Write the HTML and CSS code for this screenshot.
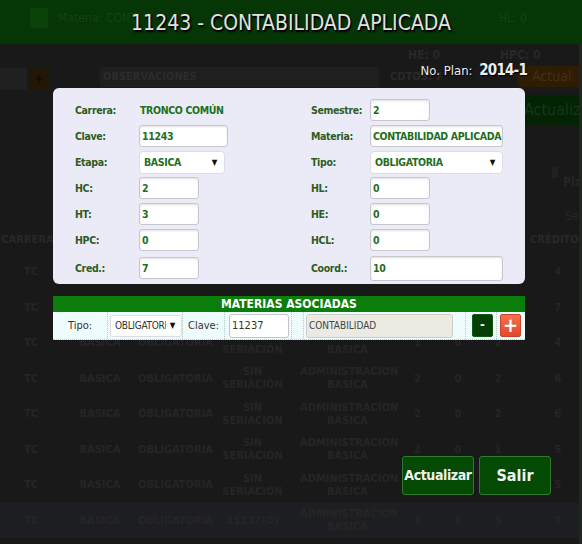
FILE: index.html
```html
<!DOCTYPE html>
<html lang="es">
<head>
<meta charset="utf-8">
<title>11243 - CONTABILIDAD APLICADA</title>
<link rel="stylesheet" href="styles.css">
</head>
<body>
<div class="page">
  <header class="topbar">
    <span class="ico"></span>
    <span class="materia">Materia: CONT</span>
    <span class="hl">HL: 0</span>
  </header>
  <div class="subrow"><span>HE: 0</span><span class="hpc">HPC: 0</span></div>
  <div class="toolrow">
    <span class="tinput"></span>
    <span class="tplus">+</span>
    <span class="obs">OBSERVACIONES</span>
    <span class="cdtos">CDTOS: 7</span>
    <span class="actual">Actual</span>
  </div>
  <div class="actbar"><span>Actualiza</span></div>
  <div class="filters">
    <div class="chk"><span class="box"></span><span class="lab">Pla</span></div>
    <div class="sea">Sea</div>
  </div>
  <table class="grid">
    <colgroup>
      <col class="c1"><col class="c2"><col class="c3"><col class="c4"><col class="c5"><col class="c6"><col class="c7"><col class="c8"><col class="c9">
    </colgroup>
    <thead>
      <tr><th>CARRERAS</th><th>ETAPA</th><th>TIPO</th><th>SERIACIÓN</th><th>ÁREA</th><th>HC</th><th>HL</th><th>HT</th><th>CRÉDITOS</th></tr>
    </thead>
    <tbody>
      <tr><td>TC</td><td>BASICA</td><td>OBLIGATORIA</td><td>SIN<br>SERIACIÓN</td><td>CONTABILIDAD<br>BASICA</td><td>1</td><td>0</td><td>2</td><td>4</td></tr>
      <tr><td>TC</td><td>BASICA</td><td>OBLIGATORIA</td><td>SIN<br>SERIACIÓN</td><td>ADMINISTRACION<br>BASICA</td><td>2</td><td>0</td><td>3</td><td>7</td></tr>
      <tr><td>TC</td><td>BASICA</td><td>OBLIGATORIA</td><td>SIN<br>SERIACIÓN</td><td>ADMINISTRACION<br>BASICA</td><td>1</td><td>0</td><td>2</td><td>4</td></tr>
      <tr><td>TC</td><td>BASICA</td><td>OBLIGATORIA</td><td>SIN<br>SERIACIÓN</td><td>ADMINISTRACION<br>BASICA</td><td>2</td><td>0</td><td>2</td><td>6</td></tr>
      <tr><td>TC</td><td>BASICA</td><td>OBLIGATORIA</td><td>SIN<br>SERIACIÓN</td><td>ADMINISTRACION<br>BASICA</td><td>2</td><td>0</td><td>2</td><td>6</td></tr>
      <tr><td>TC</td><td>BASICA</td><td>OBLIGATORIA</td><td>SIN<br>SERIACIÓN</td><td>ADMINISTRACION<br>BASICA</td><td>2</td><td>0</td><td>1</td><td>5</td></tr>
      <tr><td>TC</td><td>BASICA</td><td>OBLIGATORIA</td><td>SIN<br>SERIACIÓN</td><td>ADMINISTRACION<br>BASICA</td><td>2</td><td>0</td><td>1</td><td>5</td></tr>
      <tr class="hi"><td>TC</td><td>BASICA</td><td>OBLIGATORIA</td><td>11237(O)</td><td>ADMINISTRACION<br>BASICA</td><td>2</td><td>0</td><td>3</td><td>7</td></tr>
      <tr><td>TC</td><td>BASICA</td><td>OBLIGATORIA</td><td>SIN<br>SERIACIÓN</td><td>ADMINISTRACION<br>BASICA</td><td>2</td><td>0</td><td>2</td><td>6</td></tr>
    </tbody>
  </table>
  <div class="edge"></div>
</div>

<div class="overlay">
  <h1 class="title">11243 - CONTABILIDAD APLICADA</h1>
  <div class="plan">No. Plan: <b>2014-1</b></div>

  <div class="modal">
    <div class="form">
      <label>Carrera:</label><span class="val">TRONCO COMÚN</span>
      <label>Semestre:</label><span class="fld w60">2</span>

      <label>Clave:</label><span class="fld w89">11243</span>
      <label>Materia:</label><span class="fld w133">CONTABILIDAD APLICADA</span>

      <label>Etapa:</label><span class="sel w86"><span class="t">BASICA</span><i>▼</i></span>
      <label>Tipo:</label><span class="sel w133"><span class="t">OBLIGATORIA</span><i>▼</i></span>

      <label>HC:</label><span class="fld w60">2</span>
      <label>HL:</label><span class="fld w60">0</span>

      <label>HT:</label><span class="fld w60">3</span>
      <label>HE:</label><span class="fld w60">0</span>

      <label>HPC:</label><span class="fld w60">0</span>
      <label>HCL:</label><span class="fld w60">0</span>

      <label>Cred.:</label><span class="fld w60">7</span>
      <label>Coord.:</label><span class="fld w133 tall">10</span>
    </div>
  </div>

  <div class="assoc">
    <div class="assoc-head">MATERIAS ASOCIADAS</div>
    <div class="assoc-row">
      <span class="cell lbl">Tipo:</span>
      <span class="cell"><span class="asel"><span class="t">OBLIGATORIA</span><i>▼</i></span></span>
      <span class="cell lbl">Clave:</span>
      <span class="cell"><span class="ain">11237</span></span>
      <span class="cell"></span>
      <span class="cell"><span class="agray">CONTABILIDAD</span></span>
      <span class="cell"><span class="btn-minus">-</span></span>
      <span class="cell last"><span class="btn-plus">+</span></span>
    </div>
  </div>

  <div class="actions">
    <span class="btn">Actualizar</span>
    <span class="btn">Salir</span>
  </div>
</div>
</body>
</html>
```

FILE: styles.css
```css
* { box-sizing: border-box; }

html, body {
  margin: 0;
  padding: 0;
}

body {
  width: 582px;
  height: 544px;
  overflow: hidden;
  position: relative;
  background: #191919;
  font-family: "DejaVu Sans Condensed", "DejaVu Sans", sans-serif;
}

/* ---------- dimmed page behind the dialog ---------- */
.page {
  width: 582px;
  height: 544px;
  overflow: hidden;
  position: relative;
}

.topbar {
  height: 44px;
  background: #063506;
  display: flex;
  align-items: center;
  padding-left: 30px;
  white-space: nowrap;
}

.topbar .ico {
  width: 18px;
  height: 20px;
  margin-top: -8px;
  background: #0a420a;
  border-radius: 2px;
}

.topbar .materia {
  margin-left: 10px;
  margin-top: -8px;
  font-size: 12px;
  color: #134313;
}

.topbar .hl {
  margin-left: auto;
  margin-right: 55px;
  margin-top: -8px;
  font-size: 12px;
  color: #144414;
}

.subrow {
  height: 22px;
  display: flex;
  align-items: center;
  padding-left: 408px;
  font-size: 12px;
  font-weight: bold;
  color: #282828;
}

.subrow .hpc { margin-left: 60px; }

.toolrow {
  height: 24px;
  display: flex;
  align-items: flex-start;
  white-space: nowrap;
}

.tinput {
  width: 27px;
  height: 22px;
  margin-top: 2px;
  background: #202020;
}

.tplus {
  width: 20px;
  height: 21px;
  margin: 3px 0 0 2px;
  background: #221604;
  border-radius: 2px;
  color: #0a0a0a;
  font-size: 12px;
  font-weight: bold;
  text-align: center;
  line-height: 21px;
}

.obs {
  width: 279px;
  height: 20px;
  margin: 1px 0 0 51px;
  background: #1f1f1f;
  color: #2c2c2c;
  font-size: 11px;
  font-weight: bold;
  line-height: 20px;
  padding-left: 3px;
}

.cdtos {
  margin: 4px 0 0 11px;
  font-size: 11px;
  font-weight: bold;
  color: #2a2a2a;
}

.actual {
  margin-left: auto;
  width: 64px;
  height: 21px;
  background: #2e1c05;
  color: #4a300c;
  font-size: 14px;
  line-height: 21px;
  padding-left: 14px;
  overflow: hidden;
  border-radius: 3px 0 0 3px;
}

.actbar {
  height: 30px;
  margin-top: 5px;
  padding-left: 520px;
}

.actbar span {
  display: block;
  height: 30px;
  background: #042204;
  color: #153915;
  font-size: 16px;
  line-height: 30px;
  padding-left: 4px;
  white-space: nowrap;
  overflow: hidden;
}

.filters {
  height: 99px;
  padding: 42px 0 0 552px;
  white-space: nowrap;
  font-size: 12px;
  color: #262626;
  font-weight: bold;
}

.chk {
  display: flex;
  align-items: flex-start;
  height: 20px;
}

.chk .box {
  width: 9px;
  height: 11px;
  background: #202020;
  margin-right: 5px;
}

.chk .lab { margin-top: 8px; }

.sea {
  margin-top: 22px;
  padding-left: 13px;
  font-weight: normal;
}

.grid {
  width: 596px;
  table-layout: fixed;
  border-collapse: collapse;
  font-size: 11px;
  font-weight: bold;
  color: #252525;
  text-align: center;
  line-height: 13px;
}

.c1 { width: 62px; }
.c2 { width: 76px; }
.c3 { width: 67px; }
.c4 { width: 95px; }
.c5 { width: 95px; }
.c6 { width: 45px; }
.c7 { width: 36px; }
.c8 { width: 44px; }
.c9 { width: 76px; }

.grid th {
  height: 30px;
  padding: 0;
  font-size: 11px;
  color: #282828;
  white-space: nowrap;
  overflow: hidden;
}

.grid td {
  height: 35.5px;
  padding: 0;
  white-space: nowrap;
}

.grid tr.hi td { background: #1d1e22; }

.edge {
  position: absolute;
  right: 0;
  top: 44px;
  width: 3px;
  height: 500px;
  background: #1f251f;
}

/* ---------- dialog on top ---------- */
.overlay {
  position: absolute;
  inset: 0;
  display: flex;
  flex-direction: column;
  align-items: flex-start;
}

.title {
  margin: 0;
  width: 582px;
  height: 44px;
  line-height: 46px;
  text-align: center;
  font-size: 21px;
  font-weight: normal;
  color: #e2e2e2;
  text-shadow: 1px 1px 1px #000, 1px 2px 2px #000;
  white-space: nowrap;
}

.plan {
  width: 582px;
  margin-top: 16px;
  height: 20px;
  line-height: 20px;
  text-align: right;
  padding-right: 55px;
  font-size: 13px;
  color: #ececec;
  text-shadow: 1px 1px 1px #000;
  white-space: nowrap;
}

.plan b {
  font-size: 15px;
  letter-spacing: -0.8px;
  margin-left: 3px;
}

.modal {
  margin: 8px 0 0 53px;
  width: 472px;
  height: 196px;
  background: #ebebf7;
  border-radius: 6px;
  padding: 11px 0 0 22px;
}

.form {
  display: grid;
  grid-template-columns: 64px 172px 59px 1fr;
  grid-template-rows: repeat(6, 22px) 26px;
  row-gap: 4px;
  align-items: center;
  font-size: 10.5px;
  letter-spacing: -0.35px;
  font-weight: bold;
}

.form label { color: #2e5c23; }

.val { color: #207020; padding-left: 1px; }

.fld, .sel {
  display: block;
  height: 22px;
  line-height: 20px;
  background: #fff;
  border: 1px solid #c7c7cf;
  border-radius: 3px;
  box-shadow: inset 0 1px 2px rgba(0, 0, 0, 0.12);
  color: #1f6e1f;
  padding-left: 2px;
  white-space: nowrap;
  overflow: hidden;
}

.fld.tall { height: 25px; line-height: 23px; }

.sel {
  display: flex;
  height: 23px;
  line-height: 21px;
  border-color: #dcdce2;
  border-radius: 4px;
  box-shadow: none;
  padding: 0 7px 0 4px;
}

.sel .t, .asel .t {
  flex: 1;
  overflow: hidden;
}

.sel i, .asel i {
  font-style: normal;
  font-size: 8px;
  color: #111;
  margin-left: 4px;
}

.w60 { width: 60px; }
.w86 { width: 86px; }
.w89 { width: 89px; }
.w133 { width: 133px; }

/* associated subjects */
.assoc {
  margin: 12px 0 0 53px;
  width: 472px;
}

.assoc-head {
  height: 16px;
  background: #0a7d0a;
  color: #fff;
  font-size: 12px;
  font-weight: bold;
  line-height: 17px;
  text-align: center;
}

.assoc-row {
  height: 28px;
  display: grid;
  grid-template-columns: 55px 75px 42px 67px 12px 162px 31px 28px;
  background: #effcfd;
  border-bottom: 1px dotted #b8c8c8;
}

.cell {
  display: flex;
  align-items: center;
  border-right: 1px dotted #b8c8c8;
  font-size: 11px;
  color: #333;
}

.cell.last { border-right: none; }

.cell.lbl { justify-content: center; }

.asel {
  display: flex;
  margin-left: 2px;
  width: 72px;
  height: 22px;
  line-height: 20px;
  background: #fff;
  border: 1px solid #dcdce2;
  border-radius: 3px;
  padding: 0 6px 0 4px;
  color: #333;
  font-size: 10px;
  letter-spacing: -0.3px;
  white-space: nowrap;
}

.ain {
  margin-left: 4px;
  width: 60px;
  height: 24px;
  line-height: 22px;
  background: #fff;
  border: 1px solid #c4c4c4;
  border-radius: 3px;
  padding-left: 2px;
  color: #333;
}

.agray {
  margin-left: 2px;
  width: 147px;
  height: 24px;
  line-height: 22px;
  background: #ebebe4;
  border: 1px solid #cdcdc6;
  border-radius: 3px;
  padding-left: 2px;
  color: #444;
  font-size: 10px;
}

.btn-minus, .btn-plus {
  width: 21px;
  height: 23px;
  border-radius: 2px;
  color: #fff;
  font-weight: bold;
  text-align: center;
}

.btn-minus {
  margin-left: 6px;
  background: #053f05;
  border: 1px solid #0f5a0f;
  font-size: 13px;
  line-height: 20px;
}

.btn-plus {
  margin-left: 3px;
  background: linear-gradient(#f4724f, #e3482c);
  border: 1px solid #c9442a;
  font-size: 20px;
  line-height: 21px;
}

.actions {
  margin: 116px 0 0 402px;
  display: flex;
  gap: 5px;
}

.btn {
  width: 72px;
  height: 39px;
  background: #044a04;
  border: 1px solid #2d7a2d;
  border-radius: 3px;
  color: #f0f0f0;
  font-size: 14px;
  letter-spacing: -0.4px;
  font-weight: bold;
  line-height: 37px;
  text-align: center;
  white-space: nowrap;
}

.btn + .btn { font-size: 16px; letter-spacing: 0; }
```
